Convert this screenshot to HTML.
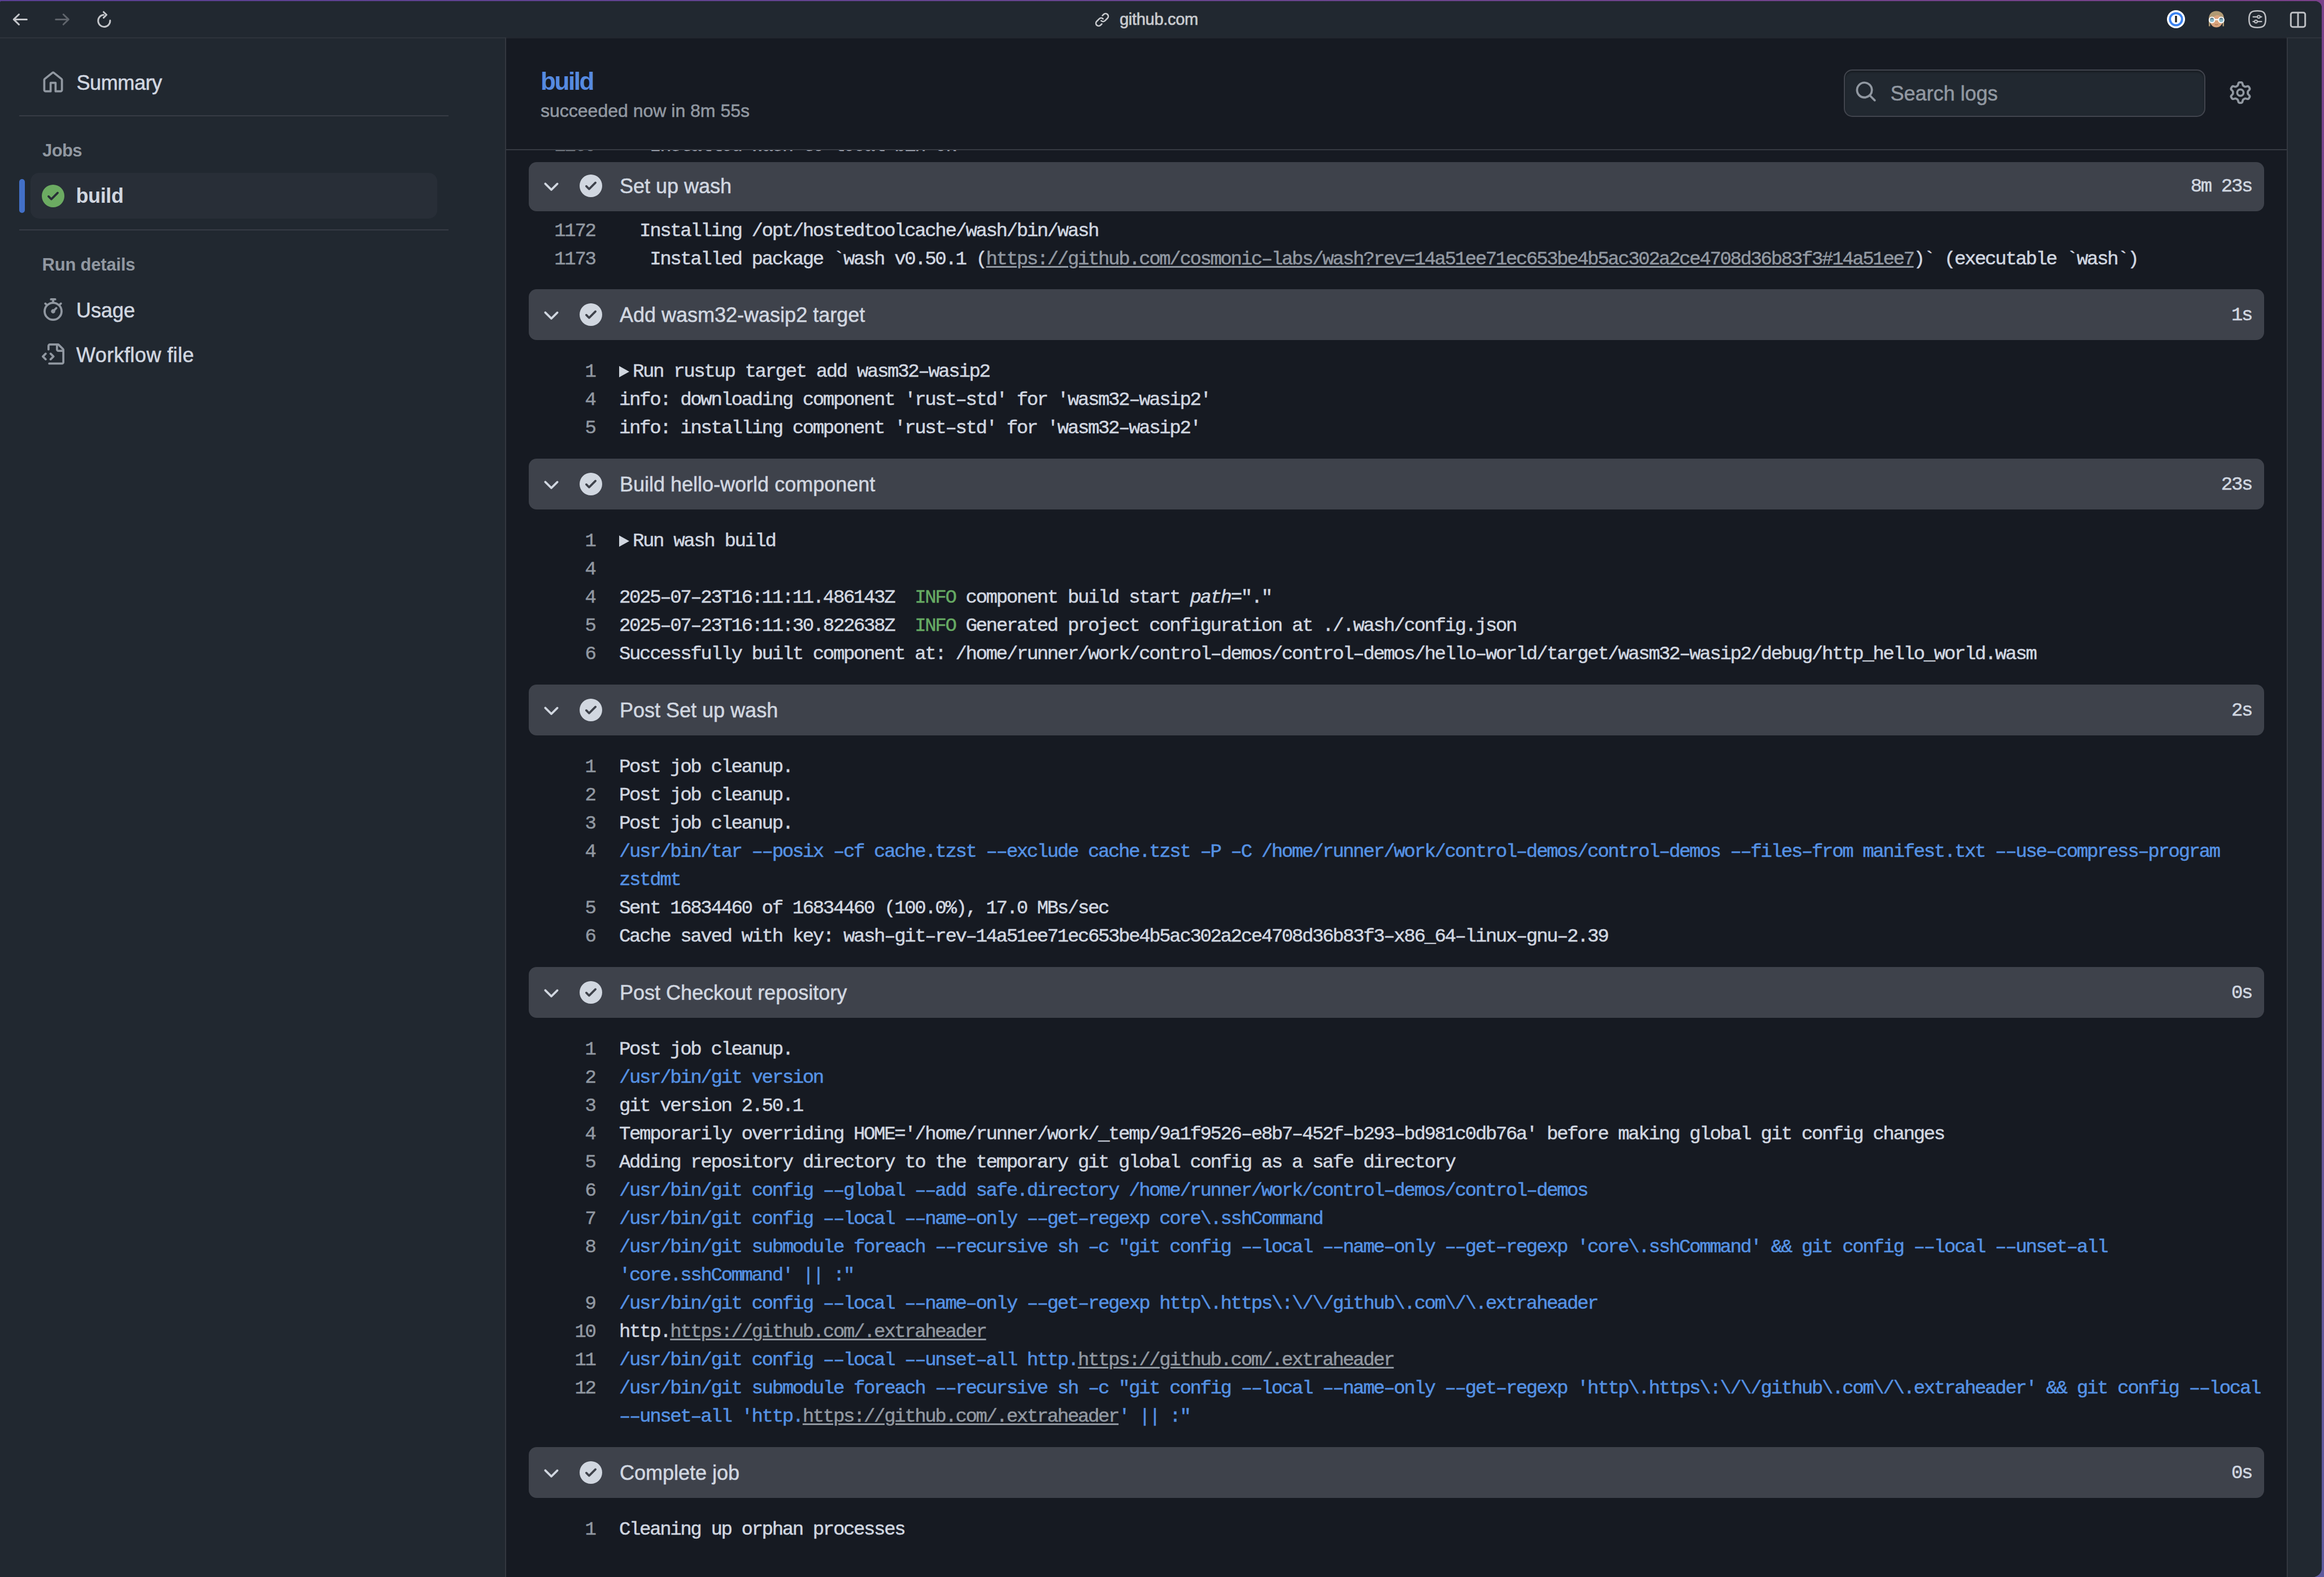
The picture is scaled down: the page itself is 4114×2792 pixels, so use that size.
<!DOCTYPE html>
<html><head><meta charset="utf-8"><title>build</title>
<style>
*{margin:0;padding:0;box-sizing:border-box}
html,body{width:4114px;height:2792px;overflow:hidden;background:#6a4a9a}
body{position:relative;font-family:"Liberation Sans",sans-serif}
.abs{position:absolute}
#frame{position:absolute;left:0;top:0;width:4114px;height:2792px;background:linear-gradient(90deg,#5a4094 0%,#694590 50%,#7a418a 100%)}
#frame2{position:absolute;left:4084px;top:0;width:30px;height:2792px;background:linear-gradient(180deg,#7a418a 0%,#6d4f8e 50%,#5e5a9e 100%)}
#win{position:absolute;left:0;top:2px;width:4110px;height:2790px;background:#212830;border-radius:3px 12px 16px 0;overflow:hidden}
#bar{position:absolute;left:0;top:0;width:4110px;height:64px;background:#212830}
#url{position:absolute;left:1982px;top:8px;font-weight:bold;font-size:28px;color:#c9cbcf;letter-spacing:-0.6px;line-height:34px}
#side{position:absolute;left:0;top:64px;width:896px;height:2726px;background:#212830;border-right:2px solid #33373f;border-top:2px solid #2d333b}
.stext{position:absolute;font-size:36px;line-height:42px;color:#d1d7e0;white-space:nowrap}
.shead{position:absolute;font-size:31px;line-height:36px;font-weight:bold;color:#9198a1;white-space:nowrap}
.divider{position:absolute;left:34px;width:760px;height:2px;background:#373c45}
#main{position:absolute;left:896px;top:64px;width:3152px;height:2726px;background:#161a22;overflow:hidden;border-top:2px solid #22272e}
#rpanel{position:absolute;left:4048px;top:64px;width:62px;height:2726px;background:#212830;border-left:2px solid #33373f;border-top:2px solid #2d333b}
#hdr{position:absolute;left:0;top:0;width:3152px;height:198px;background:#161a22;border-bottom:2px solid #363a42;z-index:5}
.stepbar{position:absolute;left:40px;width:3072px;height:90px;background:#3e424b;border-radius:14px;z-index:3}
.stitle{position:absolute;color:#d1d7e0;white-space:nowrap}
.dur{position:absolute;right:22px;font-family:"Liberation Mono",monospace;font-size:34px;line-height:40px;letter-spacing:-2.36px;color:#d1d7e0;-webkit-text-stroke:0.5px currentColor}
.ln{position:absolute;left:0;width:3152px;height:50px;font-family:"Liberation Mono",monospace;font-size:34px;letter-spacing:-2.36px;color:#d1d7e0;white-space:pre;line-height:50px;-webkit-text-stroke:0.5px currentColor}
.ln .n{position:absolute;right:2994.5px;top:0;color:#9198a1;text-align:right}
.ln .t{position:absolute;left:200px;top:0}
.tri{display:inline-block;width:0;height:0;border-left:18px solid #d1d7e0;border-top:10px solid transparent;border-bottom:10px solid transparent;margin:0 6px 0 0;vertical-align:-1px}
.b{color:#5592e4}
.g{color:#66aa63}
.u{color:#9198a1;text-decoration:underline;text-decoration-thickness:3px;text-underline-offset:3px}
i{font-style:italic}

.tx{position:absolute;white-space:nowrap;-webkit-text-stroke:0.55px currentColor}
.stitle{-webkit-text-stroke:0.55px currentColor}

</style></head><body>
<div id="frame"></div><div id="frame2"></div>
<div id="win">
<div id="bar"><svg class="abs" style="left:0;top:-2px;width:240px;height:66px" viewBox="0 0 240 66"><g fill="none" stroke-linecap="round" stroke-linejoin="round" stroke-width="3"><path d="M24.3 34.4H47.4M33.5 25.5L24.3 34.4 33.5 43.4" stroke="#c4c6ca"/><path d="M98.7 34.4H121.3M112.2 25.5L121.3 34.4 112.2 43.3" stroke="#5f646b"/><path d="M183.3 26.3A10.6 10.6 0 1 0 194.9 36.3" stroke="#c4c6ca"/><path d="M183.4 21.2L188.6 26.3 183.4 31.4" stroke="#c4c6ca"/></g></svg><svg class="abs" style="left:1937px;top:19px;width:28px;height:28px" viewBox="0 0 16 16" fill="#c9cbcf"><path d="m7.775 3.275 1.25-1.25a3.5 3.5 0 1 1 4.95 4.95l-2.5 2.5a3.5 3.5 0 0 1-4.95 0 .751.751 0 0 1 .018-1.042.751.751 0 0 1 1.042-.018 1.998 1.998 0 0 0 2.83 0l2.5-2.5a2.002 2.002 0 0 0-2.83-2.83l-1.25 1.25a.751.751 0 0 1-1.042-.018.751.751 0 0 1-.018-1.042Zm-4.69 9.64a1.998 1.998 0 0 0 2.83 0l1.25-1.25a.751.751 0 0 1 1.042.018.751.751 0 0 1 .018 1.042l-1.25 1.25a3.5 3.5 0 1 1-4.95-4.95l2.5-2.5a3.5 3.5 0 0 1 4.95 0 .751.751 0 0 1-.018 1.042.751.751 0 0 1-1.042.018 1.998 1.998 0 0 0-2.83 0l-2.5 2.5a1.998 1.998 0 0 0 0 2.83Z"/></svg><div class="tx" style="left:1982.00px;top:14.35px;font-size:29px;line-height:36px;color:#c9cbcf;letter-spacing:-0.3px;-webkit-text-stroke:0.7px #c9cbcf">github.com</div><svg class="abs" style="left:3835px;top:16px;width:34px;height:34px" viewBox="0 0 34 34"><circle cx="17" cy="16" r="16" fill="#fff"/><circle cx="17" cy="16" r="12.6" fill="#3b82f0"/><circle cx="17" cy="16" r="8.8" fill="#fff"/><rect x="15.3" y="10" width="3.4" height="11.5" fill="#222"/></svg><svg class="abs" style="left:3906px;top:16px;width:34px;height:32px" viewBox="0 0 34 32"><defs><linearGradient id="lens" x1="0" y1="0" x2="0" y2="1"><stop offset="0" stop-color="#2c3b42"/><stop offset="0.45" stop-color="#86b3c4"/><stop offset="1" stop-color="#9cc6d4"/></linearGradient></defs><path d="M4 16C4 6 10 1.4 17.5 1.4S31 6 31 16v12.5h-2.5V19H6.5v9.5H4Z" fill="#b09a74"/><ellipse cx="17.5" cy="19.5" rx="11" ry="11" fill="#d9a47e"/><path d="M4.5 16C5 6 10 2 17.5 2S30.5 6 30.5 13c-3-3-6-5-10-4.5C15 9 11 13 4.5 16Z" fill="#b09a74"/><circle cx="9.6" cy="17.4" r="4.8" fill="url(#lens)" stroke="#fff" stroke-width="2"/><circle cx="26" cy="17.4" r="4.8" fill="url(#lens)" stroke="#fff" stroke-width="2"/><rect x="14.2" y="15.6" width="7.2" height="2.2" fill="#fff"/><path d="M14.8 25.2q2.7 1.4 5.4 0" stroke="#b07654" stroke-width="1.4" fill="none"/></svg><svg class="abs" style="left:3979px;top:15px;width:34px;height:34px" viewBox="0 0 34 34"><path d="M17 2.3C27 2.3 31.7 4.5 31.7 17S27 31.7 17 31.7 2.3 29.5 2.3 17 7 2.3 17 2.3Z" fill="none" stroke="#bdbfc3" stroke-width="2.6"/><g stroke="#bdbfc3" stroke-width="2.2" fill="none" stroke-linecap="round"><path d="M9.5 12.8h15M9.5 21.2h15"/></g><circle cx="19.5" cy="12.8" r="2.4" fill="#212830" stroke="#bdbfc3" stroke-width="2"/><circle cx="14.5" cy="21.2" r="2.4" fill="#212830" stroke="#bdbfc3" stroke-width="2"/></svg><svg class="abs" style="left:4053px;top:18px;width:30px;height:30px" viewBox="0 0 30 30"><rect x="2.3" y="2.3" width="25.4" height="25.4" rx="3.5" fill="none" stroke="#bdbfc3" stroke-width="3"/><path d="M15 2.3v25.4" stroke="#bdbfc3" stroke-width="3"/></svg></div>
<div id="side"><svg class="abs" style="left:73.5px;top:57.8px;width:40px;height:40px" viewBox="0 0 16 16" fill="#9198a1"><path d="M6.906.664a1.749 1.749 0 0 1 2.187 0l5.25 4.2c.415.332.657.835.657 1.367v7.019A1.75 1.75 0 0 1 13.25 15h-3.5a.75.75 0 0 1-.75-.75V9H7v5.25a.75.75 0 0 1-.75.75h-3.5A1.75 1.75 0 0 1 1 13.25V6.23c0-.531.242-1.034.657-1.366l5.25-4.2Zm1.25 1.171a.25.25 0 0 0-.312 0l-5.25 4.2a.25.25 0 0 0-.094.196v7.019c0 .138.112.25.25.25H5.5V8.25a.75.75 0 0 1 .75-.75h3.5a.75.75 0 0 1 .75.75v5.25h2.75a.25.25 0 0 0 .25-.25V6.23a.25.25 0 0 0-.094-.195Z"/></svg><div class="tx" style="left:135.50px;top:56.43px;font-size:36px;line-height:45px;color:#d1d7e0;letter-spacing:-0.4px">Summary</div><div class="divider" style="top:136px"></div><div class="tx" style="left:75.00px;top:179.16px;font-size:31px;line-height:39px;font-weight:bold;color:#9198a1;letter-spacing:-0.6px;-webkit-text-stroke:0">Jobs</div><div class="abs" style="left:34px;top:249px;width:10px;height:60px;background:#4270c8;border-radius:5px"></div><div class="abs" style="left:54px;top:238px;width:720px;height:81px;background:#282e37;border-radius:15px"></div><svg class="abs" style="left:74px;top:259px;width:40px;height:40px" viewBox="0 0 16 16" fill="#6cab62"><path d="M8 16A8 8 0 1 1 8 0a8 8 0 0 1 0 16Zm3.78-9.72a.751.751 0 0 0-.018-1.042.751.751 0 0 0-1.042-.018L6.75 9.19 5.28 7.72a.751.751 0 0 0-1.042.018.751.751 0 0 0-.018 1.042l2 2a.75.75 0 0 0 1.06 0Z"/></svg><div class="tx" style="left:134.50px;top:256.43px;font-size:36px;line-height:45px;font-weight:bold;color:#d1d7e0;letter-spacing:-0.4px;-webkit-text-stroke:0">build</div><div class="divider" style="top:338px"></div><div class="tx" style="left:74.50px;top:381.26px;font-size:31px;line-height:39px;font-weight:bold;color:#9198a1;letter-spacing:-0.2px;-webkit-text-stroke:0">Run details</div><svg class="abs" style="left:73.5px;top:460px;width:40px;height:40px" viewBox="0 0 16 16" fill="#9198a1"><path d="M5.75.75A.75.75 0 0 1 6.5 0h3a.75.75 0 0 1 0 1.5h-.75v1l-.001.041a6.724 6.724 0 0 1 3.464 1.435l.007-.006.75-.75a.749.749 0 0 1 1.275.326.749.749 0 0 1-.215.734l-.75.75-.006.007a6.75 6.75 0 1 1-10.548 0L2.72 5.03l-.75-.75a.751.751 0 0 1 .018-1.042.751.751 0 0 1 1.042-.018l.75.75.007.006A6.72 6.72 0 0 1 7.25 2.541V1.5H6.5a.75.75 0 0 1-.75-.75ZM8 14.5a5.25 5.25 0 1 0-.001-10.501A5.25 5.25 0 0 0 8 14.5Zm.389-6.7 1.33-1.33a.75.75 0 1 1 1.061 1.06L9.45 8.861A1.503 1.503 0 0 1 8 10.75a1.499 1.499 0 1 1 .389-2.95Z"/></svg><div class="tx" style="left:135.00px;top:459.03px;font-size:36px;line-height:45px;color:#d1d7e0">Usage</div><svg class="abs" style="left:74px;top:540px;width:40px;height:40px" viewBox="0 0 16 16" fill="#9198a1"><path d="M4 1.75C4 .784 4.784 0 5.75 0h5.586c.464 0 .909.184 1.237.513l2.914 2.914c.329.328.513.773.513 1.237v8.586A1.75 1.75 0 0 1 14.25 15h-9a.75.75 0 0 1 0-1.5h9a.25.25 0 0 0 .25-.25V6h-2.75A1.75 1.75 0 0 1 10 4.25V1.5H5.75a.25.25 0 0 0-.25.25v2.5a.75.75 0 0 1-1.5 0Zm1.72 4.97a.75.75 0 0 1 1.06 0l2 2a.75.75 0 0 1 0 1.06l-2 2a.749.749 0 0 1-1.275-.326.749.749 0 0 1 .215-.734l1.47-1.47-1.47-1.47a.75.75 0 0 1 0-1.06ZM3.28 7.78 1.81 9.25l1.47 1.47a.751.751 0 0 1-.018 1.042.751.751 0 0 1-1.042.018l-2-2a.75.75 0 0 1 0-1.06l2-2a.751.751 0 0 1 1.042.018.751.751 0 0 1 .018 1.042Zm8.22-6.218V4.25c0 .138.112.25.25.25h2.688l-.011-.013-2.914-2.914-.013-.011Z"/></svg><div class="tx" style="left:135.00px;top:538.33px;font-size:36px;line-height:45px;color:#d1d7e0;letter-spacing:0.4px">Workflow file</div></div>
<div id="main"><div id="hdr"><div class="tx" style="left:61.00px;top:47.95px;font-size:44px;line-height:55px;font-weight:bold;color:#568ae0;letter-spacing:-2.4px;-webkit-text-stroke:0">build</div><div class="tx" style="left:61.00px;top:107.61px;font-size:32px;line-height:40px;color:#9198a1">succeeded now in 8m 55s</div><div class="abs" style="left:2368px;top:55px;width:640px;height:84px;background:#212830;border:2px solid #42454e;border-radius:15px;box-shadow:inset 0 3px 3px rgba(0,0,0,0.28)"></div><svg class="abs" style="left:2387px;top:74px;width:40px;height:40px" viewBox="0 0 16 16" fill="#9198a1"><path d="M10.68 11.74a6 6 0 0 1-7.922-8.982 6 6 0 0 1 8.982 7.922l3.04 3.04a.749.749 0 0 1-.326 1.275.749.749 0 0 1-.734-.215ZM11.5 7a4.499 4.499 0 1 0-8.997 0A4.499 4.499 0 0 0 11.5 7Z"/></svg><div class="tx" style="left:2450.50px;top:75.03px;font-size:36px;line-height:45px;color:#9198a1">Search logs</div><svg class="abs" style="left:3050px;top:76px;width:40px;height:40px" viewBox="0 0 16 16" fill="#9198a1"><path d="M8 0a8.2 8.2 0 0 1 .701.031C9.444.095 9.99.645 10.16 1.29l.288 1.107c.018.066.079.158.212.224.231.114.454.243.668.386.123.082.233.09.299.071l1.103-.303c.644-.176 1.392.021 1.82.63.27.385.506.792.704 1.218.315.675.111 1.422-.364 1.891l-.814.806c-.049.048-.098.147-.088.294.016.257.016.515 0 .772-.01.147.038.246.088.294l.814.806c.475.469.679 1.216.364 1.891a7.977 7.977 0 0 1-.704 1.217c-.428.61-1.176.807-1.82.63l-1.102-.302c-.067-.019-.177-.011-.3.071a5.909 5.909 0 0 1-.668.386c-.133.066-.194.158-.211.224l-.29 1.106c-.168.646-.715 1.196-1.458 1.26a8.006 8.006 0 0 1-1.402 0c-.743-.064-1.289-.614-1.458-1.26l-.289-1.106c-.018-.066-.079-.158-.212-.224a5.738 5.738 0 0 1-.668-.386c-.123-.082-.233-.09-.299-.071l-1.103.303c-.644.176-1.392-.021-1.82-.63a8.12 8.12 0 0 1-.704-1.218c-.315-.675-.111-1.422.363-1.891l.815-.806c.05-.048.098-.147.088-.294a6.214 6.214 0 0 1 0-.772c.01-.147-.038-.246-.088-.294l-.815-.806C.635 6.045.431 5.298.746 4.623a7.92 7.92 0 0 1 .704-1.217c.428-.61 1.176-.807 1.82-.63l1.102.302c.067.019.177.011.3-.071.214-.143.437-.272.668-.386.133-.066.194-.158.211-.224l.29-1.106C6.009.645 6.556.095 7.299.03 7.53.01 7.764 0 8 0Zm-.571 1.525c-.036.003-.108.036-.137.146l-.289 1.105c-.147.561-.549.967-.998 1.189-.173.086-.34.183-.5.29-.417.278-.97.423-1.529.27l-1.103-.303c-.109-.03-.175.016-.195.045-.22.312-.412.644-.573.99-.014.031-.021.11.059.19l.815.806c.411.406.562.957.53 1.456a4.709 4.709 0 0 0 0 .582c.032.499-.119 1.05-.53 1.456l-.815.806c-.081.08-.073.159-.059.19.162.346.353.677.573.989.02.03.085.076.195.046l1.102-.303c.56-.153 1.113-.008 1.53.27.161.107.328.204.501.29.447.222.85.629.997 1.189l.289 1.105c.029.109.101.143.137.146a6.6 6.6 0 0 0 1.142 0c.036-.003.108-.036.137-.146l.289-1.105c.147-.561.549-.967.998-1.189.173-.086.34-.183.5-.29.417-.278.97-.423 1.529-.27l1.103.303c.109.029.175-.016.195-.045.22-.313.411-.644.573-.99.014-.031.021-.11-.059-.19l-.815-.806c-.411-.406-.562-.957-.53-1.456a4.709 4.709 0 0 0 0-.582c-.032-.499.119-1.05.53-1.456l.815-.806c.081-.08.073-.159.059-.19a6.464 6.464 0 0 0-.573-.989c-.02-.03-.085-.076-.195-.046l-1.102.303c-.56.153-1.113.008-1.53-.27a4.44 4.44 0 0 0-.501-.29c-.447-.222-.85-.629-.997-1.189l-.289-1.105c-.029-.11-.101-.143-.137-.146a6.6 6.6 0 0 0-1.142 0ZM11 8a3 3 0 1 1-6 0 3 3 0 0 1 6 0ZM9.5 8a1.5 1.5 0 1 0-3.001.001A1.5 1.5 0 0 0 9.5 8Z"/></svg></div><div class="ln" style="top:164.55px"><span class="n">1169</span><span class="t">   Installed wash to local bin ok</span></div><div class="stepbar" style="top:219px;height:87px"><svg class="abs" style="left:19.600000000000023px;top:24.1px;width:40px;height:40px" viewBox="0 0 16 16" fill="#d1d7e0"><path d="M12.78 5.22a.749.749 0 0 1 0 1.06l-4.25 4.25a.749.749 0 0 1-1.06 0L3.22 6.28a.749.749 0 0 1 .215-1.275.749.749 0 0 1 .845.215L8 8.94l3.72-3.72a.749.749 0 0 1 1.06 0Z"/></svg><svg class="abs" style="left:90px;top:22px;width:40px;height:40px" viewBox="0 0 16 16" fill="#d1d7e0"><path d="M8 16A8 8 0 1 1 8 0a8 8 0 0 1 0 16Zm3.78-9.72a.751.751 0 0 0-.018-1.042.751.751 0 0 0-1.042-.018L6.75 9.19 5.28 7.72a.751.751 0 0 0-1.042.018.751.751 0 0 0-.018 1.042l2 2a.75.75 0 0 0 1.06 0Z"/></svg><div class="stitle" style="left:161.00px;top:20.03px;font-size:36px;line-height:45px;color:#d1d7e0">Set up wash</div><div class="dur" style="top:23.45px">8m 23s</div></div><div class="ln" style="top:315.95px"><span class="n">1172</span><span class="t">  Installing /opt/hostedtoolcache/wash/bin/wash</span></div><div class="ln" style="top:365.95px"><span class="n">1173</span><span class="t">   Installed package `wash v0.50.1 (<span class="u">https://github.com/cosmonic–labs/wash?rev=14a51ee71ec653be4b5ac302a2ce4708d36b83f3#14a51ee7</span>)` (executable `wash`)</span></div><div class="stepbar" style="top:444px;height:90px"><svg class="abs" style="left:19.600000000000023px;top:27.1px;width:40px;height:40px" viewBox="0 0 16 16" fill="#d1d7e0"><path d="M12.78 5.22a.749.749 0 0 1 0 1.06l-4.25 4.25a.749.749 0 0 1-1.06 0L3.22 6.28a.749.749 0 0 1 .215-1.275.749.749 0 0 1 .845.215L8 8.94l3.72-3.72a.749.749 0 0 1 1.06 0Z"/></svg><svg class="abs" style="left:90px;top:25px;width:40px;height:40px" viewBox="0 0 16 16" fill="#d1d7e0"><path d="M8 16A8 8 0 1 1 8 0a8 8 0 0 1 0 16Zm3.78-9.72a.751.751 0 0 0-.018-1.042.751.751 0 0 0-1.042-.018L6.75 9.19 5.28 7.72a.751.751 0 0 0-1.042.018.751.751 0 0 0-.018 1.042l2 2a.75.75 0 0 0 1.06 0Z"/></svg><div class="stitle" style="left:161.00px;top:23.03px;font-size:36px;line-height:45px;color:#d1d7e0">Add wasm32-wasip2 target</div><div class="dur" style="top:26.45px">1s</div></div><div class="ln" style="top:565.35px"><span class="n">1</span><span class="t"><span class="tri"></span>Run rustup target add wasm32–wasip2</span></div><div class="ln" style="top:615.35px"><span class="n">4</span><span class="t">info: downloading component &#x27;rust–std&#x27; for &#x27;wasm32–wasip2&#x27;</span></div><div class="ln" style="top:665.35px"><span class="n">5</span><span class="t">info: installing component &#x27;rust–std&#x27; for &#x27;wasm32–wasip2&#x27;</span></div><div class="stepbar" style="top:744px;height:90px"><svg class="abs" style="left:19.600000000000023px;top:27.1px;width:40px;height:40px" viewBox="0 0 16 16" fill="#d1d7e0"><path d="M12.78 5.22a.749.749 0 0 1 0 1.06l-4.25 4.25a.749.749 0 0 1-1.06 0L3.22 6.28a.749.749 0 0 1 .215-1.275.749.749 0 0 1 .845.215L8 8.94l3.72-3.72a.749.749 0 0 1 1.06 0Z"/></svg><svg class="abs" style="left:90px;top:25px;width:40px;height:40px" viewBox="0 0 16 16" fill="#d1d7e0"><path d="M8 16A8 8 0 1 1 8 0a8 8 0 0 1 0 16Zm3.78-9.72a.751.751 0 0 0-.018-1.042.751.751 0 0 0-1.042-.018L6.75 9.19 5.28 7.72a.751.751 0 0 0-1.042.018.751.751 0 0 0-.018 1.042l2 2a.75.75 0 0 0 1.06 0Z"/></svg><div class="stitle" style="left:161.00px;top:23.03px;font-size:36px;line-height:45px;color:#d1d7e0">Build hello-world component</div><div class="dur" style="top:26.45px">23s</div></div><div class="ln" style="top:865.35px"><span class="n">1</span><span class="t"><span class="tri"></span>Run wash build</span></div><div class="ln" style="top:915.35px"><span class="n">4</span><span class="t"></span></div><div class="ln" style="top:965.35px"><span class="n">4</span><span class="t">2025–07–23T16:11:11.486143Z  <span class="g">INFO</span> component build start <i>path</i>=&quot;.&quot;</span></div><div class="ln" style="top:1015.35px"><span class="n">5</span><span class="t">2025–07–23T16:11:30.822638Z  <span class="g">INFO</span> Generated project configuration at ./.wash/config.json</span></div><div class="ln" style="top:1065.35px"><span class="n">6</span><span class="t">Successfully built component at: /home/runner/work/control–demos/control–demos/hello–world/target/wasm32–wasip2/debug/http_hello_world.wasm</span></div><div class="stepbar" style="top:1144px;height:90px"><svg class="abs" style="left:19.600000000000023px;top:27.1px;width:40px;height:40px" viewBox="0 0 16 16" fill="#d1d7e0"><path d="M12.78 5.22a.749.749 0 0 1 0 1.06l-4.25 4.25a.749.749 0 0 1-1.06 0L3.22 6.28a.749.749 0 0 1 .215-1.275.749.749 0 0 1 .845.215L8 8.94l3.72-3.72a.749.749 0 0 1 1.06 0Z"/></svg><svg class="abs" style="left:90px;top:25px;width:40px;height:40px" viewBox="0 0 16 16" fill="#d1d7e0"><path d="M8 16A8 8 0 1 1 8 0a8 8 0 0 1 0 16Zm3.78-9.72a.751.751 0 0 0-.018-1.042.751.751 0 0 0-1.042-.018L6.75 9.19 5.28 7.72a.751.751 0 0 0-1.042.018.751.751 0 0 0-.018 1.042l2 2a.75.75 0 0 0 1.06 0Z"/></svg><div class="stitle" style="left:161.00px;top:23.03px;font-size:36px;line-height:45px;color:#d1d7e0">Post Set up wash</div><div class="dur" style="top:26.45px">2s</div></div><div class="ln" style="top:1265.35px"><span class="n">1</span><span class="t">Post job cleanup.</span></div><div class="ln" style="top:1315.35px"><span class="n">2</span><span class="t">Post job cleanup.</span></div><div class="ln" style="top:1365.35px"><span class="n">3</span><span class="t">Post job cleanup.</span></div><div class="ln" style="top:1415.35px"><span class="n">4</span><span class="t"><span class="b">/usr/bin/tar ––posix –cf cache.tzst ––exclude cache.tzst –P –C /home/runner/work/control–demos/control–demos ––files–from manifest.txt ––use–compress–program</span></span></div><div class="ln" style="top:1465.35px"><span class="n"></span><span class="t"><span class="b">zstdmt</span></span></div><div class="ln" style="top:1515.35px"><span class="n">5</span><span class="t">Sent 16834460 of 16834460 (100.0%), 17.0 MBs/sec</span></div><div class="ln" style="top:1565.35px"><span class="n">6</span><span class="t">Cache saved with key: wash–git–rev–14a51ee71ec653be4b5ac302a2ce4708d36b83f3–x86_64–linux–gnu–2.39</span></div><div class="stepbar" style="top:1644px;height:90px"><svg class="abs" style="left:19.600000000000023px;top:27.1px;width:40px;height:40px" viewBox="0 0 16 16" fill="#d1d7e0"><path d="M12.78 5.22a.749.749 0 0 1 0 1.06l-4.25 4.25a.749.749 0 0 1-1.06 0L3.22 6.28a.749.749 0 0 1 .215-1.275.749.749 0 0 1 .845.215L8 8.94l3.72-3.72a.749.749 0 0 1 1.06 0Z"/></svg><svg class="abs" style="left:90px;top:25px;width:40px;height:40px" viewBox="0 0 16 16" fill="#d1d7e0"><path d="M8 16A8 8 0 1 1 8 0a8 8 0 0 1 0 16Zm3.78-9.72a.751.751 0 0 0-.018-1.042.751.751 0 0 0-1.042-.018L6.75 9.19 5.28 7.72a.751.751 0 0 0-1.042.018.751.751 0 0 0-.018 1.042l2 2a.75.75 0 0 0 1.06 0Z"/></svg><div class="stitle" style="left:161.00px;top:23.03px;font-size:36px;line-height:45px;color:#d1d7e0">Post Checkout repository</div><div class="dur" style="top:26.45px">0s</div></div><div class="ln" style="top:1765.35px"><span class="n">1</span><span class="t">Post job cleanup.</span></div><div class="ln" style="top:1815.35px"><span class="n">2</span><span class="t"><span class="b">/usr/bin/git version</span></span></div><div class="ln" style="top:1865.35px"><span class="n">3</span><span class="t">git version 2.50.1</span></div><div class="ln" style="top:1915.35px"><span class="n">4</span><span class="t">Temporarily overriding HOME=&#x27;/home/runner/work/_temp/9a1f9526–e8b7–452f–b293–bd981c0db76a&#x27; before making global git config changes</span></div><div class="ln" style="top:1965.35px"><span class="n">5</span><span class="t">Adding repository directory to the temporary git global config as a safe directory</span></div><div class="ln" style="top:2015.35px"><span class="n">6</span><span class="t"><span class="b">/usr/bin/git config ––global ––add safe.directory /home/runner/work/control–demos/control–demos</span></span></div><div class="ln" style="top:2065.35px"><span class="n">7</span><span class="t"><span class="b">/usr/bin/git config ––local ––name–only ––get–regexp core\.sshCommand</span></span></div><div class="ln" style="top:2115.35px"><span class="n">8</span><span class="t"><span class="b">/usr/bin/git submodule foreach ––recursive sh –c &quot;git config ––local ––name–only ––get–regexp &#x27;core\.sshCommand&#x27; &amp;&amp; git config ––local ––unset–all</span></span></div><div class="ln" style="top:2165.35px"><span class="n"></span><span class="t"><span class="b">&#x27;core.sshCommand&#x27; || :&quot;</span></span></div><div class="ln" style="top:2215.35px"><span class="n">9</span><span class="t"><span class="b">/usr/bin/git config ––local ––name–only ––get–regexp http\.https\:\/\/github\.com\/\.extraheader</span></span></div><div class="ln" style="top:2265.35px"><span class="n">10</span><span class="t">http.<span class="u">https://github.com/.extraheader</span></span></div><div class="ln" style="top:2315.35px"><span class="n">11</span><span class="t"><span class="b">/usr/bin/git config ––local ––unset–all http.</span><span class="u">https://github.com/.extraheader</span></span></div><div class="ln" style="top:2365.35px"><span class="n">12</span><span class="t"><span class="b">/usr/bin/git submodule foreach ––recursive sh –c &quot;git config ––local ––name–only ––get–regexp &#x27;http\.https\:\/\/github\.com\/\.extraheader&#x27; &amp;&amp; git config ––local</span></span></div><div class="ln" style="top:2415.35px"><span class="n"></span><span class="t"><span class="b">––unset–all &#x27;http.<span class="u">https://github.com/.extraheader</span>&#x27; || :&quot;</span></span></div><div class="stepbar" style="top:2494px;height:90px"><svg class="abs" style="left:19.600000000000023px;top:27.1px;width:40px;height:40px" viewBox="0 0 16 16" fill="#d1d7e0"><path d="M12.78 5.22a.749.749 0 0 1 0 1.06l-4.25 4.25a.749.749 0 0 1-1.06 0L3.22 6.28a.749.749 0 0 1 .215-1.275.749.749 0 0 1 .845.215L8 8.94l3.72-3.72a.749.749 0 0 1 1.06 0Z"/></svg><svg class="abs" style="left:90px;top:25px;width:40px;height:40px" viewBox="0 0 16 16" fill="#d1d7e0"><path d="M8 16A8 8 0 1 1 8 0a8 8 0 0 1 0 16Zm3.78-9.72a.751.751 0 0 0-.018-1.042.751.751 0 0 0-1.042-.018L6.75 9.19 5.28 7.72a.751.751 0 0 0-1.042.018.751.751 0 0 0-.018 1.042l2 2a.75.75 0 0 0 1.06 0Z"/></svg><div class="stitle" style="left:161.00px;top:23.03px;font-size:36px;line-height:45px;color:#d1d7e0">Complete job</div><div class="dur" style="top:26.45px">0s</div></div><div class="ln" style="top:2615.35px"><span class="n">1</span><span class="t">Cleaning up orphan processes</span></div></div>
<div id="rpanel"></div>
</div>
</body></html>
